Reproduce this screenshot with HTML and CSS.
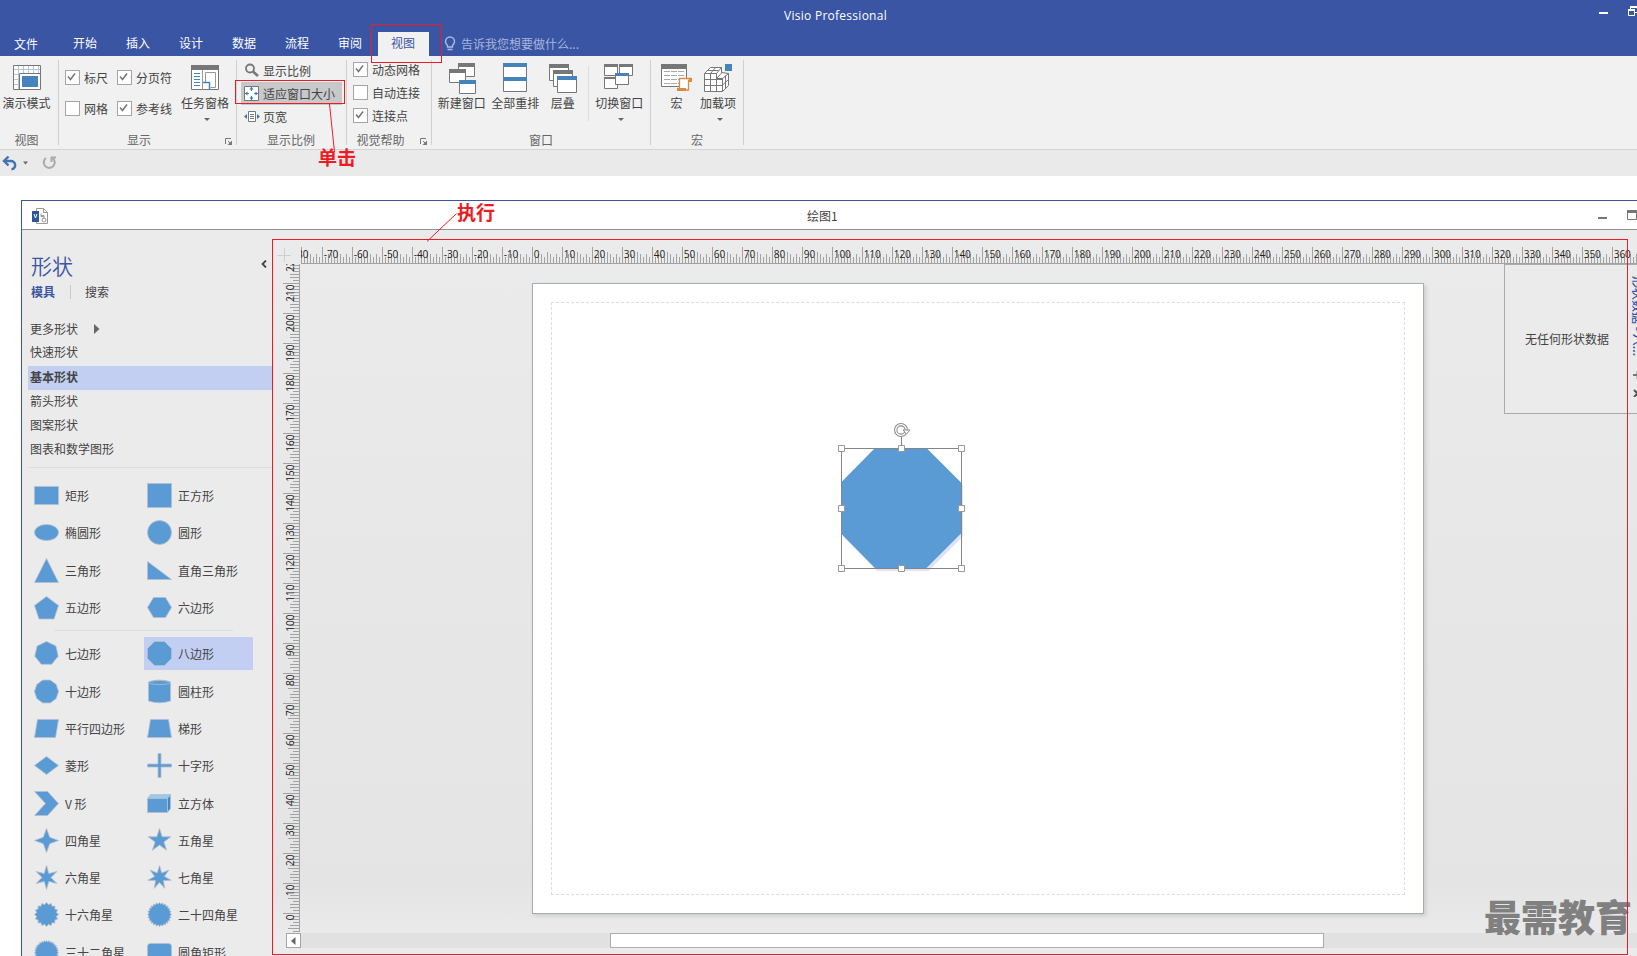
FILE: index.html
```html
<!DOCTYPE html>
<html lang="zh-CN">
<head>
<meta charset="utf-8">
<title>Visio Professional</title>
<link rel="stylesheet" href="styles.css">
</head>
<body>
<div class="app">
  <header class="titlebar">
    <div class="app-title">Visio Professional</div>
    <svg class="app-controls" width="38" height="20"><path d="M0 13h9" stroke="#fff" stroke-width="2"/><path d="M31.500 9V7H39M31 7h8M36 12.500h3" stroke="#fff" fill="none"/><path d="M31 6h8v2h-8z" fill="#fff"/><path d="M29.500 10.500h6v5h-6z" fill="none" stroke="#fff"/><path d="M29 9h7v2h-7z" fill="#fff"/></svg>
    <nav class="tabs">
      <span class="tab file">文件</span><span class="tab">开始</span><span class="tab">插入</span><span class="tab">设计</span><span class="tab">数据</span><span class="tab">流程</span><span class="tab">审阅</span><span class="tab active">视图</span>
      <span class="tell"><svg width="12" height="16"><path d="M3.500 11V9.500C2 8 1.500 7 1.500 5.500a4.500 4.500 0 0 1 9 0C10.500 7 10 8 8.500 9.500V11zM3.500 13.500h5" fill="none" stroke="#a9bfe0" stroke-width="1.400"/></svg>告诉我您想要做什么...</span>
    </nav>
  </header>

  <section class="ribbon">
    <div class="group g-view">
      <div class="body">
        <div class="big"><svg width="28" height="25"><path d="M.5.5h27v24H.5z" fill="#fff" stroke="#777"/><path d="M1 4.500h26M1 9.500h26M1 14.500h5M1 19.500h5M5.500 1v23M10.500 1v7M15.500 1v7M20.500 1v7M25.500 1v7" stroke="#b5c5dc"/><path d="M6.500 24V8.500H28" stroke="#777" fill="#fff"/><path d="M9 11h16v11H9z" fill="#4682bc"/></svg><span>演示模式</span></div>
      </div>
      <div class="label">视图</div>
    </div>
    <div class="group g-show">
      <div class="body">
        <div class="checks two">
          <span class="check on">标尺</span><span class="check on">分页符</span>
          <span class="check">网格</span><span class="check on">参考线</span>
        </div>
        <div class="big"><svg width="28" height="25"><path d="M.5.5h27v24H.5z" fill="#fff" stroke="#777"/><path d="M0 0h28v5H0z" fill="#777"/><path d="M3 8.500h6M3 11.500h6M3 14.500h6M3 17.500h6M3 20.500h6" stroke="#4682bc"/><path d="M14.500 17V7.500h10v15h-5" stroke="#999" fill="none"/><path d="M11.500 5v20" stroke="#999"/><path d="M12 17.500h6.500V25" stroke="#4682bc" fill="none" stroke-width="1.500"/></svg><span>任务窗格</span><i class="caret shift"></i></div>
      </div>
      <div class="label">显示</div><svg class="launcher" width="8" height="8"><path d="M.5 6V.5H6M3 3l3 3" stroke="#777" fill="none"/><path d="M7 2.500V7H2.500z" fill="#777"/></svg>
    </div>
    <div class="group g-zoom">
      <div class="body rows">
        <div class="row"><svg width="16" height="16"><circle cx="5" cy="5.500" r="4" fill="none" stroke="#777" stroke-width="1.800"/><path d="M8 8.500l5 4.500" stroke="#777" stroke-width="2.600"/></svg>显示比例</div>
        <div class="row hot"><svg width="16" height="16"><path d="M.5.5h14v14H.5z" fill="#fff" stroke="#777"/><path d="M7.500 1v4M7.500 10v4M1 7.500h4M10 7.500h4" stroke="#3c78b8" stroke-width="1.200"/><path d="M5.500 3.500l2-2.500 2 2.500zM5.500 11.500l2 2.500 2-2.500zM3.500 5.500L1 7.500l2.500 2zM11.500 5.500l2.500 2-2.500 2z" fill="#3c78b8"/></svg>适应窗口大小</div>
        <div class="row"><svg width="16" height="16"><path d="M4.500 2.500h7v10h-7z" fill="#fff" stroke="#777"/><path d="M6 5.500h4M6 7.500h4M6 9.500h4" stroke="#777"/><path d="M3 5v5L0 7.500zM13 5v5l3-2.500z" fill="#3c78b8"/></svg>页宽</div>
      </div>
      <div class="label">显示比例</div>
    </div>
    <div class="group g-aid">
      <div class="body"><div class="checks one"><span class="check on">动态网格</span><span class="check">自动连接</span><span class="check on">连接点</span></div></div>
      <div class="label">视觉帮助</div><svg class="launcher" width="8" height="8"><path d="M.5 6V.5H6M3 3l3 3" stroke="#777" fill="none"/><path d="M7 2.500V7H2.500z" fill="#777"/></svg>
    </div>
    <div class="group g-window">
      <div class="body">
        <div class="big w54"><svg width="28" height="31"><g fill="#fff" stroke="#777"><path d="M10.500.5h16v13h-16z"/><path d="M1.500 6.500h16v13h-16z"/><path d="M11.500 17.500h16v13h-16z"/></g><path d="M10 0h17v4H10zM1 6h17v4H1z" fill="#777"/><path d="M11 17h17v4H11z" fill="#4682bc"/></svg><span>新建窗口</span></div>
        <div class="big w54"><svg width="24" height="31"><path d="M.5.5h23v28H.5z" fill="#fff" stroke="#777"/><path d="M0 0h24v4H0zM0 14h24v4H0z" fill="#4682bc"/></svg><span>全部重排</span></div>
        <div class="big w42"><svg width="28" height="31"><g fill="#fff" stroke="#777"><path d="M.5 1.500h19v16H.5z"/><path d="M4.500 7.500h19v16h-19z"/><path d="M8.500 13.500h19v16h-19z"/></g><path d="M0 1h20v4H0zM4 7h20v4H4z" fill="#777"/><path d="M8 13h20v4H8z" fill="#4682bc"/></svg><span>层叠</span></div>
        <div class="big w60"><svg width="30" height="31"><g fill="#fff" stroke="#777"><path d="M.5 1.500h13v11H.5zM15.500 1.500h13v11h-13zM.5 14.500h13v11H.5z"/><path d="M11.500 10.500h13v11h-13z"/></g><path d="M0 1h14v3H0zM15 1h14v3H15zM0 14h11v2H0z" fill="#777"/><path d="M11 10h14v3H11z" fill="#4682bc"/></svg><span>切换窗口</span><i class="caret shift"></i></div>
      </div>
      <div class="label">窗口</div>
    </div>
    <div class="group g-macro">
      <div class="body">
        <div class="big w44"><svg width="32" height="31"><path d="M.5 1.500h25v22H.5z" fill="#fff" stroke="#777"/><path d="M0 1h26v5H0z" fill="#777"/><path d="M3 8.500h20M3 12.500h20M3 16.500h20M3 20.500h20" stroke="#aaa" stroke-dasharray="6 1"/><path d="M18.500 25V15.500h11v2h-2V27H17" fill="#fff" stroke="#d98b44" stroke-width="1.300"/><path d="M16 25h9v3h-9zM28 15h3v4h-3z" fill="#d98b44"/></svg><span>宏</span></div>
        <div class="big w40"><svg width="30" height="31"><g fill="#fff" stroke="#777"><path d="M1.500 10.500l6-6h11v5l7 1v12l-6 6h-18z"/><path d="M1.500 10.500h12v18M1.500 16.500h18M1.500 22.500h18M7.500 10.500v18M19.500 15v13.500M13.500 10.500l5-6M7.500 10.500l5-6M4.500 7.500h11M13.500 15.500h6l6-5M19.500 22l6-5.500M22.500 12.500v13M14 15l5-5.500" fill="none"/></g><path d="M22 1h7v7h-7z" fill="#4682bc"/></svg><span>加载项</span><i class="caret shift"></i></div>
      </div>
      <div class="label">宏</div>
    </div>
  </section>

  <div class="quick"><svg width="60" height="18"><path d="M8.500 1.500L4 6l4.500 4.500" fill="none" stroke="#3f74b5" stroke-width="2.400"/><path d="M4 6h6.500a4 4 0 0 1 1 8.300" fill="none" stroke="#3f74b5" stroke-width="2.400"/><path d="M23 6.500h5l-2.500 3z" fill="#666"/><path d="M46 3a5.500 5.500 0 1 0 6.500 0" fill="none" stroke="#aaa" stroke-width="2"/><path d="M51.500 7V2.500H56" fill="none" stroke="#aaa" stroke-width="2"/></svg></div>

  <main class="doc">
    <div class="doc-title">
      <svg class="doc-icon" width="17" height="17"><path d="M4.500.5h7l4 4v11h-11z" fill="#fff" stroke="#999"/><path d="M11.500.5v4h4M9 7.500h3v3M9 5.500v3h3" fill="none" stroke="#999"/><circle cx="12" cy="12" r="2" fill="none" stroke="#999"/><path d="M0 3h7v11H0z" fill="#2b5797"/><path d="M2 6l1.500 4L5 6" stroke="#fff" fill="none"/></svg>
      <span class="doc-name">绘图1</span>
      <svg class="doc-controls" width="39" height="12"><path d="M0 8h9" stroke="#777" stroke-width="2"/><path d="M29.500.5h9v9h-9z" fill="#fff" stroke="#777"/><path d="M29 0h10v3H29z" fill="#777"/></svg>
    </div>
    <div class="work">
      <aside class="panel">
        <div class="panel-head"><h1>形状</h1><svg width="6" height="8"><path d="M5 .5L1.500 4 5 7.500" fill="none" stroke="#444" stroke-width="1.800"/></svg></div>
        <div class="panel-tabs"><b>模具</b><i></i><span>搜索</span></div>
        <ul class="stencils"><li class="more">更多形状<svg width="6" height="10"><path d="M0 0l5.500 5L0 10z" fill="#666"/></svg></li><li>快速形状</li><li class="sel">基本形状</li><li>箭头形状</li><li>图案形状</li><li>图表和数学图形</li></ul>
        <div class="shapes" id="shapes-a"></div>
        <div class="divider"></div>
        <div class="shapes" id="shapes-b"></div>
      </aside>
      <section class="canvas">
        <svg class="corner" width="28" height="25"><path d="M12.500 9v14M5 16.500h14" stroke="#cfcfcf"/></svg>
        <svg class="hruler" id="hruler" width="1336" height="25"></svg>
        <svg class="vruler" id="vruler" width="28" height="668"></svg>
        <div class="stage">
          <div class="page"><div class="margin"></div></div>
          <svg class="selection" width="134" height="156">
            <path d="M43 30h51.500L129 64.500v51L94.500 150H43L9 115.500v-51z" fill="#dfe5f4"/>
            <path d="M41 27h51.500L127 61.500v51L92.500 147H41L7 112.500v-51z" fill="#5b9bd5"/>
            <path d="M7.500 27.500h120v120H7.500zM67.500 15v12" fill="none" stroke="#858585"/>
            <g fill="#fff" stroke="#999"><path d="M4.500 24.500h6v6h-6zM64.500 24.500h6v6h-6zM124.500 24.500h6v6h-6zM4.500 84.500h6v6h-6zM124.500 84.500h6v6h-6zM4.500 144.500h6v6h-6zM64.500 144.500h6v6h-6zM124.500 144.500h6v6h-6z"/></g>
            <circle cx="67" cy="9" r="5.300" fill="none" stroke="#8c8c8c" stroke-width="3.500"/><circle cx="67" cy="9" r="5.300" fill="none" stroke="#fff" stroke-width="1.300"/><path d="M69 9h7l-3.500 4z" fill="#fff" stroke="#8c8c8c"/>
          </svg>
          <div class="data-pane"><span>无任何形状数据</span></div>
          <div class="data-tab">形状数据 - 八...</div>
          <svg class="data-icons" width="6" height="32"><path d="M1 10h8M5.500 6v8" stroke="#777" stroke-width="1.800"/><path d="M2 25l7 7M2 32l7-7" stroke="#555" stroke-width="2"/></svg>
        </div>
        <div class="scroll"><div class="arrow"><svg width="5" height="8"><path d="M4.500 0v8L0 4z" fill="#666"/></svg></div><div class="thumb"></div></div>
      </section>
    </div>
  </main>

  <div class="watermark">最需教育</div>
  <div class="mark m-tab"></div><div class="mark m-fit"></div><div class="mark m-area"></div>
  <svg class="lines" width="500" height="250"><path d="M329.500 104L334.500 152M456.500 213.500L427 241.500" stroke="#ed1c24" fill="none"/></svg>
  <div class="note n-click">单击</div><div class="note n-run">执行</div>
</div>
<script src="script.js"></script>
</body>
</html>
```
FILE: styles.css
```css
* { box-sizing: border-box; }
body { margin: 0; overflow: hidden; background: #fff; color: #444; font: 12px/16px "Noto Sans CJK SC", sans-serif; }
svg { display: block; flex: none; }
.app { position: relative; width: 1637px; height: 956px; overflow: hidden; display: flex; flex-direction: column; }

.titlebar { height: 56px; flex: none; background: #3955a3; color: #fff; position: relative; display: flex; flex-direction: column; }
.app-title { height: 32px; padding-left: 784px; line-height: 31px; font-family: "Open Sans", sans-serif; font-size: 12px; letter-spacing: .27px; }
.app-controls { position: absolute; right: 0; top: 0; }
.tabs { display: flex; height: 24px; padding-left: 14px; line-height: 21px; }
.tab { width: 53px; }
.tab.file { width: 59px; padding-top: 1px; }
.tab.active { width: 51px; margin-left: -13px; padding-left: 13px; background: #f1f1f1; color: #3955a3; }
.tell { display: flex; gap: 5px; margin-left: 15px; color: #a7b6dc; padding-top: 1px; }
.tell svg { margin-top: 3px; }

.ribbon { height: 94px; flex: none; display: flex; background: #f1f1f1; border-bottom: 1px solid #d4d4d4; padding-top: 4px; }
.group { position: relative; height: 85px; border-right: 1px solid #d0d0d0; display: flex; flex-direction: column; }
.body { display: flex; height: 73px; }
.label { line-height: 14px; height: 12px; color: #666; text-align: center; }
.launcher { position: absolute; right: 3px; bottom: -1px; }
.g-view { width: 59px; padding-right: 5px; }
.g-show { width: 178px; }
.g-zoom { width: 110px; }
.g-aid { width: 85px; }
.g-window { width: 219px; }
.g-macro { width: 93px; }
.g-show .label, .g-aid .label { padding-right: 17px; }
.g-zoom .label { padding-right: 1px; }
.big { display: flex; flex-direction: column; align-items: center; width: 54px; padding-top: 5px; white-space: nowrap; }
.big svg { height: 31px; }
.big span { line-height: 16px; margin-top: -1px; }
.caret { border: 3px solid transparent; border-top-color: #666; border-bottom: 0; margin-top: 7px; }
.caret.shift { margin-left: 4px; }
.g-show .big { width: 54px; margin-left: 3px; }
.g-window .big, .g-macro .big { padding-top: 3px; }
.g-window .big svg, .g-macro .big svg { height: 33px; }
.w54 { width: 54px; }
.w42 { width: 42px; }
.g-window .w60 { width: 63px; margin: 6px 0 0 4px; border-left: 1px solid #ddd; height: 55px; padding-top: 0; }
.g-window .w60 svg { height: 30px; margin-top: -3px; margin-bottom: 3px; }
.g-window .w60 span { margin-top: -1px; }
.g-window .body { padding-left: 3px; }
.big.w44 { width: 44px; }
.big.w40 { width: 46px; }
.g-macro .w44 { padding-left: 7px; }
.checks { display: grid; }
.two { grid-template-columns: 52px 60px; grid-template-rows: 31px 31px; padding: 2px 0 0 7px; width: 116px; margin-left: -1px; margin-right: 1px; }
.one { grid-template-rows: repeat(3, 23px); padding-left: 6px; margin-top: -2px; height: 69px; }
.check { display: flex; align-items: center; gap: 4px; white-space: nowrap; }
.check::before { content: ""; width: 13px; height: 13px; background: #fff; border: 1px solid #a5a5a5; }
.check.on::before { background: #fff url("data:image/svg+xml,%3Csvg xmlns='http://www.w3.org/2000/svg' width='11' height='11'%3E%3Cpath d='M2 5.500l2.500 3L9 2.500' fill='none' stroke='%23777' stroke-width='1.600'/%3E%3C/svg%3E"); }
.rows { flex-direction: column; padding-left: 4px; margin-top: -1px; height: 74px; }
.row { display: flex; align-items: center; height: 23px; width: 101px; padding-left: 3px; gap: 3px; }
.row:first-child svg { margin-left: 1px; }
.row:first-child { gap: 2px; }
.row.hot { background: #c7c8c9; }

.quick { height: 26px; flex: none; background: #eaeaea; padding-top: 5px; }

.doc { margin: 24px 0 0 21px; height: 756px; flex: none; border: solid #3955a3; border-width: 1px 0 0 1px; display: flex; flex-direction: column; }
.doc-title { position: relative; height: 29px; flex: none; border-bottom: 1px solid #8e9292; display: flex; padding: 7px 0 0 10px; }
.doc-name { margin-left: 758px; line-height: 16px; }
.doc-controls { position: absolute; right: 0; top: 9px; }
.work { display: flex; flex: 1; min-height: 0; background: #ebebeb; }
.panel { width: 250px; flex: none; overflow: hidden; padding-left: 6px; }
.panel-head { display: flex; justify-content: space-between; align-items: center; padding: 19px 5px 0 3px; height: 50px; }
.panel-head h1 { margin: 0; font-size: 21px; line-height: 30px; font-weight: 350; color: #3955a3; }
.panel-head svg { margin-bottom: 2px; }
.panel-tabs { display: flex; align-items: center; height: 24px; padding-left: 3px; }
.panel-tabs b { color: #3955a3; }
.panel-tabs i { width: 1px; height: 14px; background: #c8c8c8; margin: 0 14px 0 15px; }
.stencils { list-style: none; margin: 4px 0 0; padding: 9px 0 0; border-bottom: 1px solid #dedede; height: 160px; }
.stencils li { height: 24px; line-height: 22px; padding-left: 2px; }
.stencils .more { display: flex; gap: 16px; align-items: center; }
.stencils li:nth-child(2) { margin-bottom: 1px; }
.stencils .sel { background: #c3cff2; font-weight: bold; }
.shapes { display: grid; grid-template-columns: 113px 109px; grid-auto-rows: 37.3px; padding-left: 3px; }
#shapes-a { padding-top: 9px; }
.shape { display: flex; align-items: center; gap: 6px; padding-left: 3px; height: 33px; align-self: center; white-space: nowrap; }
.shape span { padding-top: 1px; }
.shape.sel { background: #c3cff2; }
.divider { width: 179px; height: 1px; background: #dedede; margin: 4px 0 4px 26px; }

.canvas { flex: 1; min-width: 0; display: grid; grid-template-columns: 29px 1fr; grid-template-rows: 34px 668px 24px; background: linear-gradient(#ebebeb, #e4e4e4 90%, #ebebeb 98%); }
.corner, .hruler { align-self: end; }
.stage { position: relative; overflow: hidden; }
.page { position: absolute; left: 231px; top: 19px; width: 892px; height: 631px; background: #fff; border: 1px solid #a5acb3; box-shadow: 2px 2px 4px #ccc; padding: 18px; }
.margin { height: 593px; border: 1px dashed #ddd; width: 854px; }
.selection { position: absolute; left: 533px; top: 157px; }
.data-pane { position: absolute; left: 1203px; top: 0; width: 140px; height: 150px; border: 1px solid #aaa; background: #ebebeb; padding: 66px 0 0 20px; }
.data-tab { position: absolute; left: 1329px; top: 12px; transform-origin: 0 0; transform: rotate(90deg) translateY(-16px); white-space: nowrap; color: #3955a3; font-weight: 500; }
.data-icons { position: absolute; left: 1331px; top: 101px; }
.scroll { grid-column: 1 / 3; display: flex; height: 15px; margin: 1px 0 0 14px; background: #e1e1e1; }
.arrow { width: 15px; border: 1px solid #a5a5a5; background: #fff; display: grid; place-items: center; }
.thumb { margin-left: 309px; width: 714px; border: 1px solid #acacac; background: #fff; }
.tick { stroke: #a2a2a2; }
.num { font: 10px "Open Sans", sans-serif; fill: #222; }

.watermark { position: absolute; left: 1484px; top: 893px; font-size: 37px; line-height: 46px; font-weight: 900; color: #808080; white-space: nowrap; }
.mark { position: absolute; border: 1px solid #ed1c24; }
.m-tab { left: 371px; top: 24px; width: 71px; height: 39px; }
.m-fit { left: 235px; top: 80px; width: 110px; height: 24px; }
.m-area { left: 272px; top: 239px; width: 1356px; height: 716px; }
.lines { position: absolute; left: 0; top: 0; }
.note { position: absolute; color: #ed1c24; font-size: 19px; line-height: 22px; font-weight: bold; }
.n-click { left: 318px; top: 146px; }
.n-run { left: 457px; top: 201px; }
```
FILE: script.js
```js
// Outlines are drawn in a 24x24 box.
function star(n, inner, r = 12) {
  const pts = [];
  for (let i = 0; i < n * 2; i++) {
    const a = (Math.PI * i) / n - Math.PI / 2, d = i % 2 ? inner : r;
    pts.push((12 + d * Math.cos(a)).toFixed(1) + "," + (12 + d * Math.sin(a)).toFixed(1));
  }
  return `<polygon points="${pts.join(" ")}"/>`;
}
function poly(n, turn = 0) {
  const pts = [];
  for (let i = 0; i < n; i++) {
    const a = (2 * Math.PI * (i + turn)) / n - Math.PI / 2;
    pts.push((12 + 12 * Math.cos(a)).toFixed(1) + "," + (12 + 12 * Math.sin(a)).toFixed(1));
  }
  return `<polygon points="${pts.join(" ")}"/>`;
}
const path = (d) => `<path d="${d}"/>`;
const first = [
  ["矩形", path("M0 3h24v18H0z")], ["正方形", path("M0 0h24v24H0z")],
  ["椭圆形", '<ellipse cx="12" cy="12" rx="12" ry="8"/>'], ["圆形", '<circle cx="12" cy="12" r="12"/>'],
  ["三角形", path("M12 0l12 24H0z")], ["直角三角形", path("M0 3l24 18H0z")],
  ["五边形", path("M12 1l12 9-4.500 13.500h-15L0 10z")], ["六边形", path("M6 2h12l6 10-6 10H6L0 12z")],
];
const second = [
  ["七边形", poly(7)], ["八边形", path("M7 0h10l7 7v10l-7 7H7l-7-7V7z"), true],
  ["十边形", poly(10, 0.5)], ["圆柱形", path("M1 2.500Q12-1.500 23 2.500v19Q12 25 1 21.500z") + '<ellipse cx="12" cy="3" rx="11" ry="2" fill="none"/>'],
  ["平行四边形", path("M3 3h21l-3 18H0z")], ["梯形", path("M3 3h18l3 18H0z")],
  ["菱形", path("M12 3l12 9-12 9L0 12z")], ["十字形", path("M10.500 0h3v10.500H24v3H13.500V24h-3V13.500H0v-3h10.500z")],
  ["V 形", path("M0 0h13l11 12-11 12H0l11-12z")], ["立方体", '<path d="M0 7l3-4h20l-3 4z" fill="#9acbe8"/><path d="M20 7l3-4v14l-3 4z" fill="#3a8bcc"/>' + path("M0 7h20v14H0z")],
  ["四角星", star(4, 4.5)], ["五角星", star(5, 4.6)],
  ["六角星", star(6, 4.5)], ["七角星", star(7, 5)],
  ["十六角星", star(16, 10)], ["二十四角星", star(24, 10.4)],
  ["三十二角星", star(32, 10.7)], ["圆角矩形", '<rect y="3" width="24" height="20" rx="3"/>'],
];
const draw = (list) => list.map(([name, art, sel]) =>
  `<div class="shape${sel ? " sel" : ""}"><svg width="25" height="25" viewBox="-.5 -.5 25 25" fill="#5b9bd5" stroke="#b4bfcb" stroke-width=".8">${art}</svg><span>${name}</span></div>`).join("");
document.getElementById("shapes-a").innerHTML = draw(first);
document.getElementById("shapes-b").innerHTML = draw(second);

// Three pixels per millimetre, a number every ten.
const size = [16, 6, 9, 9, 6, 11, 9, 6, 9, 6];
let h = '<path class="tick" d="M0 24.500h1336M.5 8v17"/>';
for (let mm = -77; mm <= 368; mm++) {
  const x = 231.5 + mm * 3, k = ((mm % 10) + 10) % 10;
  h += `<path class="tick" d="M${x} 24v-${size[k]}"/>`;
}
for (let mm = -80; mm <= 360; mm += 10) h += `<text class="num" x="${232.7 + mm * 3}" y="18.500">${mm}</text>`;
document.getElementById("hruler").innerHTML = h;

let v = '<path class="tick" d="M27.500 0v668"/>';
for (let mm = -6; mm <= 216; mm++) {
  const y = 649.5 - mm * 3, k = ((mm % 10) + 10) % 10;
  v += `<path class="tick" d="M27 ${y}h-${size[k]}"/>`;
}
for (let mm = 0; mm <= 220; mm += 10)
  v += `<text class="num" text-anchor="end" transform="translate(22 ${650.5 - mm * 3}) rotate(-90)">${mm}</text>`;
document.getElementById("vruler").innerHTML = v;
```
